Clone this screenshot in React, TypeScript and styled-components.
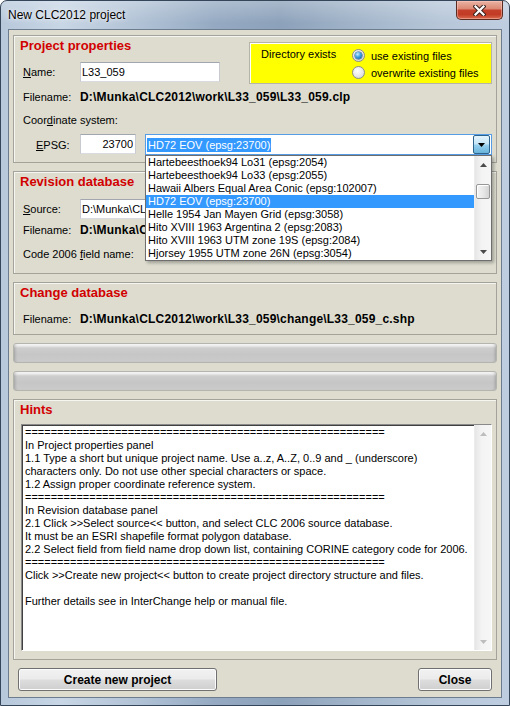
import React from "react";
import styled, { createGlobalStyle } from "styled-components";

const GlobalStyle = createGlobalStyle`
  html, body { margin: 0; padding: 0; background: #ffffff; }
  body { font-family: "Liberation Sans", Arial, sans-serif; font-size: 11px; color: #000; }
  * { box-sizing: border-box; }
`;

const Window = styled.div`
  width: 510px;
  height: 706px;
  display: flex;
  flex-direction: column;
  border: 1px solid #36465a;
  border-radius: 7px 7px 0 0;
  overflow: hidden;
  background:
    linear-gradient(180deg, rgba(255,255,255,0.25) 0px, rgba(255,255,255,0) 22px),
    linear-gradient(90deg, #b7c8db 0%, #c8d6e5 12%, #b3c4d7 26%, #95aac2 42%, #8ca1ba 55%, #a1b4c9 70%, #b6c6d8 86%, #bfcde0 100%);
`;

const TitleBar = styled.div`
  height: 28px;
  flex: none;
  display: flex;
  justify-content: space-between;
  align-items: flex-start;
  padding: 0 6px 0 7px;
`;

const TitleText = styled.div`
  margin-top: 7px;
  font-size: 12px;
  line-height: 14px;
  color: #000;
  text-shadow: 0 0 6px rgba(255, 255, 255, 0.9), 0 0 2px rgba(255, 255, 255, 0.7);
`;

const CloseBtn = styled.div`
  width: 47px;
  height: 19px;
  display: flex;
  align-items: center;
  justify-content: center;
  border: 1px solid #5b2b22;
  border-top: none;
  border-radius: 0 0 5px 5px;
  background: linear-gradient(180deg, #eab2a4 0%, #dc8a76 42%, #c4402a 52%, #c23b24 75%, #d96b50 100%);
  box-shadow: inset 0 0 0 1px rgba(255, 210, 200, 0.45);
`;

const Client = styled.div`
  flex: 1;
  margin: 0 7px 7px;
  border: 1px solid #6d7c8f;
  background: #dddccf;
  display: flex;
  flex-direction: column;
  gap: 8px;
  padding: 5px 4px 6px;
`;

const Panel = styled.section<{ $h: number }>`
  position: relative;
  height: ${(p) => p.$h}px;
  flex: none;
  border: 1px solid #a3a39c;
  box-shadow: inset 1px 1px 0 #f6f6f0;
  padding: 0 4px 0 6px;
  display: flex;
  flex-direction: column;
`;

const PanelTitle = styled.div`
  height: 20px;
  line-height: 20px;
  font-size: 13px;
  font-weight: bold;
  color: #d20000;
`;

const TopRow = styled.div`
  display: flex;
  justify-content: space-between;
  align-items: flex-start;
  height: 48px;
`;

const LeftCol = styled.div`
  display: flex;
  flex-direction: column;
`;

const Row = styled.div<{ $mt?: number; $h?: number }>`
  display: flex;
  align-items: center;
  padding-left: 3px;
  margin-top: ${(p) => p.$mt ?? 0}px;
  height: ${(p) => p.$h ?? 20}px;
  white-space: nowrap;
`;

const Label = styled.span<{ $pl?: number }>`
  width: 57px;
  flex: none;
  padding-left: ${(p) => p.$pl ?? 0}px;
`;

const Key = styled.span`
  text-decoration: underline;
`;

const Path = styled.span<{ $clip?: number }>`
  font-weight: bold;
  font-size: 12px;
  letter-spacing: 0.2px;
  overflow: hidden;
  max-width: ${(p) => (p.$clip ? `${p.$clip}px` : "none")};
`;

const TextBox = styled.input<{ $w: number; $right?: boolean }>`
  width: ${(p) => p.$w}px;
  height: 20px;
  flex: none;
  align-self: flex-start;
  margin: 0;
  border: 1px solid;
  border-color: #a2a7af #c7cad0 #d8dbe0 #c7cad0;
  background: #fff;
  font-family: inherit;
  font-size: 11px;
  color: #000;
  padding: 0 ${(p) => (p.$right ? 2 : 1)}px 0 1px;
  text-align: ${(p) => (p.$right ? "right" : "left")};
  outline: none;
`;

const DirBox = styled.div`
  margin-top: 6px;
  width: 243px;
  height: 42px;
  background: #ffff00;
  border: 1px solid #b4b4a8;
  box-shadow: inset 1px 1px 0 #ffffff;
  display: grid;
  grid-template-columns: 91px auto;
  padding: 4px 0 0 11px;
`;

const DirLabel = styled.div`
  line-height: 15px;
`;

const RadioList = styled.div`
  display: flex;
  flex-direction: column;
`;

const RadioRow = styled.div`
  display: flex;
  align-items: center;
  gap: 6px;
  height: 17px;
  white-space: nowrap;
`;

const Radio = styled.span<{ $checked?: boolean }>`
  width: 13px;
  height: 13px;
  flex: none;
  border-radius: 50%;
  border: 1px solid #8a8c8e;
  background: radial-gradient(circle at 40% 35%, #ffffff 0%, #ececec 45%, #cdcdcd 100%);
  display: flex;
  align-items: center;
  justify-content: center;
  &::after {
    content: "";
    display: ${(p) => (p.$checked ? "block" : "none")};
    width: 7px;
    height: 7px;
    border-radius: 50%;
    background: radial-gradient(circle at 38% 32%, #c9efff 0%, #3c9ee0 45%, #0e4f8a 100%);
    box-shadow: 0 0 0 0.5px #1c4e7e;
  }
`;

const ComboWrap = styled.div`
  position: relative;
  margin-left: 9px;
  width: 347px;
  height: 21px;
  align-self: flex-start;
`;

const ComboField = styled.div`
  height: 21px;
  display: flex;
  align-items: stretch;
  border: 1px solid #569de5;
  background: #fff;
`;

const ComboText = styled.div`
  flex: 1;
  display: flex;
  align-items: center;
  padding-left: 1px;
`;

const Selection = styled.span`
  background: #3399ff;
  color: #fff;
  line-height: 14px;
  padding: 0 1px;
`;

const DropBtn = styled.div`
  width: 17px;
  margin: 0 1px 0 0;
  display: flex;
  align-items: center;
  justify-content: center;
  border: 1px solid #2c628b;
  border-radius: 2px;
  background: linear-gradient(180deg, #e5f4fc 0%, #c4e5f6 48%, #98d1ef 52%, #68b3db 100%);
`;

const DropList = styled.div`
  position: absolute;
  top: 100%;
  left: 0;
  right: 0;
  z-index: 10;
  height: 106px;
  background: #fff;
  border: 1px solid #6e6e6e;
  box-shadow: 2px 2px 3px rgba(0, 0, 0, 0.28);
  display: flex;
`;

const ListItems = styled.div`
  flex: 1;
  display: flex;
  flex-direction: column;
  overflow: hidden;
`;

const ListItem = styled.div<{ $sel?: boolean }>`
  height: 13px;
  line-height: 13px;
  padding-left: 2px;
  white-space: nowrap;
  background: ${(p) => (p.$sel ? "#3399ff" : "transparent")};
  color: ${(p) => (p.$sel ? "#fff" : "#000")};
`;

const ScrollBar = styled.div`
  width: 17px;
  flex: none;
  display: flex;
  flex-direction: column;
  align-items: center;
  background: linear-gradient(90deg, #e6e6e6 0%, #f3f3f3 40%, #f6f6f6 100%);
  border-left: 1px solid #ececec;
`;

const ScrollArrow = styled.div`
  height: 17px;
  width: 100%;
  flex: none;
  display: flex;
  align-items: center;
  justify-content: center;
`;

const ScrollTrack = styled.div`
  flex: 1;
  width: 100%;
  padding: 11px 1px 0;
`;

const Thumb = styled.div`
  height: 15px;
  border: 1px solid #979797;
  border-radius: 2px;
  background: linear-gradient(90deg, #f4f4f4 0%, #e8e8e8 50%, #d4d4d4 100%);
  box-shadow: inset 1px 1px 0 #fff;
`;

const ProgressBar = styled.div`
  height: 20px;
  flex: none;
  border: 1px solid #b5b5b0;
  border-radius: 3px;
  background: linear-gradient(180deg, #f8f8f8 0px, #e9e9e9 2px, #cdcdcd 4px, #c6c6c6 60%, #cbcbcb 100%);
  box-shadow: inset 3px 0 3px -2px rgba(0, 0, 0, 0.2), inset -3px 0 3px -2px rgba(0, 0, 0, 0.2);
`;

const HintBox = styled.div`
  margin-top: 4px;
  height: 227px;
  margin-left: 1px;
  display: flex;
  border: 1px solid;
  border-color: #8a8a8a #ffffff #ffffff #8a8a8a;
  box-shadow: inset 1px 1px 0 #404040;
  background: #fff;
`;

const HintText = styled.div`
  flex: 1;
  padding: 1px 2px 0 3px;
  line-height: 13px;
  white-space: pre;
  overflow: hidden;
`;

const ButtonRow = styled.div`
  height: 23px;
  flex: none;
  display: flex;
  justify-content: space-between;
  padding: 0 5px;
`;

const Button = styled.button<{ $w: number }>`
  width: ${(p) => p.$w}px;
  height: 23px;
  margin: 0;
  padding: 0;
  border: 1px solid #707070;
  border-radius: 3px;
  background: linear-gradient(180deg, #f2f2f2 0%, #ebebeb 48%, #dddddd 52%, #cfcfcf 100%);
  box-shadow: inset 0 0 0 1px #fcfcfc;
  font-family: inherit;
  font-size: 12px;
  font-weight: bold;
  color: #000;
`;

const Arrow = ({ up, color }: { up?: boolean; color: string }) => (
  <svg width="7" height="4" viewBox="0 0 7 4">
    <path d={up ? "M0 4h7L3.5 0z" : "M0 0h7L3.5 4z"} fill={color} />
  </svg>
);

const items = [
  "Hartebeesthoek94 Lo31 (epsg:2054)",
  "Hartebeesthoek94 Lo33 (epsg:2055)",
  "Hawaii Albers Equal Area Conic (epsg:102007)",
  "HD72 EOV (epsg:23700)",
  "Helle 1954 Jan Mayen Grid (epsg:3058)",
  "Hito XVIII 1963 Argentina 2 (epsg:2083)",
  "Hito XVIII 1963 UTM zone 19S (epsg:2084)",
  "Hjorsey 1955 UTM zone 26N (epsg:3054)",
];

const eq = "========================================================";
const hintLines = [
  eq,
  "In Project properties panel",
  "1.1 Type a short but unique project name. Use a..z, A..Z, 0..9 and _ (underscore)",
  "characters only. Do not use other special characters or space.",
  "1.2 Assign proper coordinate reference system.",
  eq,
  "In Revision database panel",
  "2.1 Click >>Select source<< button, and select CLC 2006 source database.",
  "It must be an ESRI shapefile format polygon database.",
  "2.2 Select field from field name drop down list, containing CORINE category code for 2006.",
  eq,
  "Click >>Create new project<< button to create project directory structure and files.",
  "",
  "Further details see in InterChange help or manual file.",
];

const projectFile = String.raw`D:\Munka\CLC2012\work\L33_059\L33_059.clp`;
const sourceFile = String.raw`D:\Munka\CLC2006\L33_059_2006.shp`;
const revFile = String.raw`D:\Munka\CLC2006\L33_059_2006.shp`;
const changeFile = String.raw`D:\Munka\CLC2012\work\L33_059\change\L33_059_c.shp`;

export default function App() {
  return (
    <>
      <GlobalStyle />
      <Window>
        <TitleBar>
          <TitleText>New CLC2012 project</TitleText>
          <CloseBtn aria-label="Close">
            <svg width="13" height="11" viewBox="0 0 13 11">
              <path d="M2.5 1.5L10.5 9.5M10.5 1.5L2.5 9.5" stroke="#3b2320" strokeWidth="4.2" strokeLinecap="square" />
              <path d="M2.5 1.5L10.5 9.5M10.5 1.5L2.5 9.5" stroke="#ffffff" strokeWidth="2.2" strokeLinecap="square" />
            </svg>
          </CloseBtn>
        </TitleBar>
        <Client>
          <Panel $h={128}>
            <TopRow>
              <LeftCol>
                <PanelTitle>Project properties</PanelTitle>
                <Row $mt={6}>
                  <Label>
                    <Key>N</Key>ame:
                  </Label>
                  <TextBox $w={140} readOnly value="L33_059" />
                </Row>
              </LeftCol>
              <DirBox>
                <DirLabel>Directory exists</DirLabel>
                <RadioList>
                  <RadioRow>
                    <Radio $checked />
                    use existing files
                  </RadioRow>
                  <RadioRow>
                    <Radio />
                    overwrite existing files
                  </RadioRow>
                </RadioList>
              </DirBox>
            </TopRow>
            <Row $mt={5} $h={16}>
              <Label>Filename:</Label>
              <Path>{projectFile}</Path>
            </Row>
            <Row $mt={7} $h={16}>
              <span>
                Coor<Key>d</Key>inate system:
              </span>
            </Row>
            <Row $mt={6} $h={21}>
              <Label $pl={13}>
                <Key>E</Key>PSG:
              </Label>
              <TextBox $w={56} $right readOnly value="23700" />
              <ComboWrap>
                <ComboField>
                  <ComboText>
                    <Selection>HD72 EOV (epsg:23700)</Selection>
                  </ComboText>
                  <DropBtn>
                    <Arrow color="#000" />
                  </DropBtn>
                </ComboField>
                <DropList>
                  <ListItems>
                    {items.map((it) => (
                      <ListItem key={it} $sel={it.startsWith("HD72")}>
                        {it}
                      </ListItem>
                    ))}
                  </ListItems>
                  <ScrollBar>
                    <ScrollArrow>
                      <Arrow up color="#4a4a4a" />
                    </ScrollArrow>
                    <ScrollTrack>
                      <Thumb />
                    </ScrollTrack>
                    <ScrollArrow>
                      <Arrow color="#4a4a4a" />
                    </ScrollArrow>
                  </ScrollBar>
                </DropList>
              </ComboWrap>
            </Row>
          </Panel>

          <Panel $h={103}>
            <PanelTitle>Revision database</PanelTitle>
            <Row $mt={7}>
              <Label>
                <Key>S</Key>ource:
              </Label>
              <TextBox $w={300} readOnly value={sourceFile} />
            </Row>
            <Row $mt={3} $h={16}>
              <Label>Filename:</Label>
              <Path $clip={65}>{revFile}</Path>
            </Row>
            <Row $mt={6}>
              <span>
                Code 2006 <Key>f</Key>ield name:
              </span>
            </Row>
          </Panel>

          <Panel $h={53}>
            <PanelTitle>Change database</PanelTitle>
            <Row $mt={8} $h={16}>
              <Label>Filename:</Label>
              <Path>{changeFile}</Path>
            </Row>
          </Panel>

          <ProgressBar />
          <ProgressBar />

          <Panel $h={261}>
            <PanelTitle>Hints</PanelTitle>
            <HintBox>
              <HintText>{hintLines.join("\n")}</HintText>
              <ScrollBar>
                <ScrollArrow>
                  <Arrow up color="#bdbdbd" />
                </ScrollArrow>
                <ScrollTrack />
                <ScrollArrow>
                  <Arrow color="#bdbdbd" />
                </ScrollArrow>
              </ScrollBar>
            </HintBox>
          </Panel>

          <ButtonRow>
            <Button $w={199}>Create new project</Button>
            <Button $w={74}>Close</Button>
          </ButtonRow>
        </Client>
      </Window>
    </>
  );
}
